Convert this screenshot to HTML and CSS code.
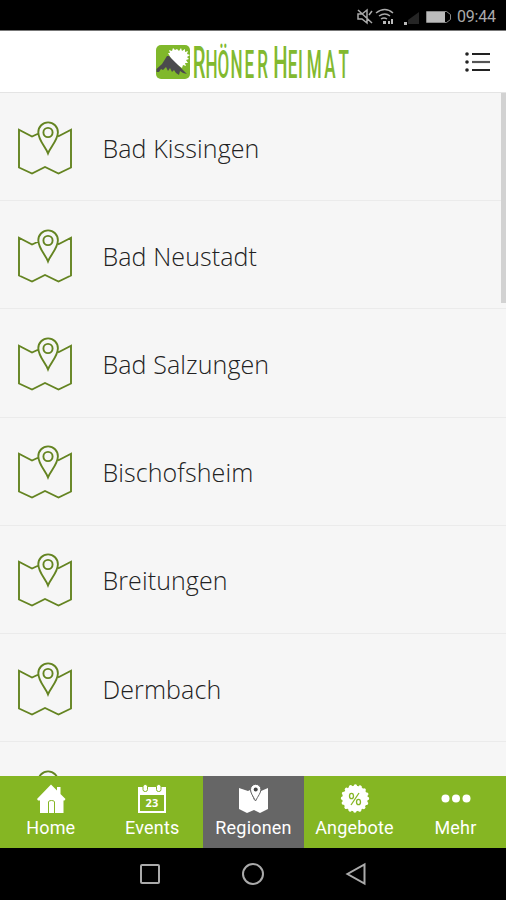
FILE: index.html
```html
<!DOCTYPE html>
<html lang="de">
<head>
<meta charset="utf-8">
<title>Rhöner Heimat</title>
<link rel="stylesheet" href="styles.css">
</head>
<body>
<svg class="defs" aria-hidden="true">
  <symbol id="map" viewBox="0 0 56 56">
    <path d="M21.5 13.500 15 16.500 2 9.700V47.500L15 53.500 28 47 41.500 53.500 54 47.500V9.700L41 16.500M31 33.300C28.500 27 21.300 20 21.300 12.200a9.800 9.800 0 0 1 19.600 0C40.900 20 33.500 27 31 33.300Z"/>
    <circle cx="31" cy="12.500" r="4.600"/>
  </symbol>
</svg>
<div class="screen">
  <div class="status">
    <svg class="status-icons" width="98" height="18" viewBox="0 0 98 18">
      <g fill="none" stroke="#aaa" stroke-width="1.500">
        <path d="M1 6h4l5-4v13l-5-4H1zM1 2l14 13M12 7l3-4"/>
        <path d="M19 5q9-7 17 0M22 8q6-4 11 0M24 11q3-2 6 0"/>
      </g>
      <path d="M26 13h3v3h-3zM31 13h2v3h-2zM34 11h2v5h-2zM47 14h3v3h-3z" fill="#bbb"/>
      <path d="M51 16V12l11-8v12z" fill="#252525"/>
      <path d="M69.500 3.500h20l4 3v5l-4 3h-20z" fill="none" stroke="#888"/>
      <path d="M70 4h18v10H70z" fill="#bbb"/>
    </svg>
    <span class="clock">09:44</span>
  </div>
  <header class="header">
    <svg class="logo" width="200" height="42" viewBox="0 0 200 42" role="img" aria-label="Rhöner Heimat">
      <rect x="1" y="4" width="34" height="34" rx="5" fill="#80b82b"/>
      <path d="M22 8l2 2 2-3 1 3 3-2v3l3-1-1 3 3 1-3 2 2 2-3 1 2 3-3 0 1 3-3-1-1 3-9-6-5-9 2 0-1-3 3 1 1-3 2 2z" fill="#fff"/>
      <path d="M1.500 31v-3L7 23l5-8 2-0 7 7 4 4 7 7-4-1-3-2-1 4-3-2-2-3-2 2-2-4-2 3-2-4-3 3-2-1-2 3z" fill="#4b4b4d"/>
      <text class="wordmark" transform="scale(.45 1)" y="37" x="84 112 139 168 199 227 245 263 295 318 337 376 408"><tspan class="cap">R</tspan>HÖNER <tspan class="cap">H</tspan>EIMAT</text>
    </svg>
    <svg class="menu" width="28" height="22" viewBox="0 0 28 22">
      <path d="M8 3h18M8 19h18" stroke="#222" stroke-width="2.200"/>
      <path d="M8 11h18" stroke="#555" stroke-width="2.200"/>
      <g fill="#222"><circle cx="3" cy="3" r="1.800"/><circle cx="3" cy="11" r="1.800"/><circle cx="3" cy="19" r="1.800"/></g>
    </svg>
  </header>
  <main class="list">
    <div class="row"><svg class="map"><use href="#map"/></svg><span>Bad Kissingen</span></div>
    <div class="row"><svg class="map"><use href="#map"/></svg><span>Bad Neustadt</span></div>
    <div class="row"><svg class="map"><use href="#map"/></svg><span>Bad Salzungen</span></div>
    <div class="row"><svg class="map"><use href="#map"/></svg><span>Bischofsheim</span></div>
    <div class="row"><svg class="map"><use href="#map"/></svg><span>Breitungen</span></div>
    <div class="row"><svg class="map"><use href="#map"/></svg><span>Dermbach</span></div>
    <div class="row"><svg class="map"><use href="#map"/></svg></div>
    <div class="scrollbar"></div>
  </main>
  <nav class="tabs">
    <div class="tab">
      <svg width="32" height="32" viewBox="0 0 32 32"><path d="M16 1.500 22 7.500V4H25.500v7l5 5-1 1.500h-1V30H5V17.500H3L2 16z" fill="#fff"/><path d="M13.500 30V19q0-1.500 3-1.500t3 1.500v11" fill="none" stroke="#85b623"/></svg>
      <span>Home</span>
    </div>
    <div class="tab">
      <svg width="32" height="32" viewBox="0 0 32 32"><path d="M2 4h28v26H2z" fill="#fff"/><path d="M4 12h24V28H4z" fill="#85b623"/><g fill="#fff" stroke="#85b623"><rect x="7" y="1.500" width="4.500" height="7" rx="2"/><rect x="20.500" y="1.500" width="4.500" height="7" rx="2"/></g><text x="16" y="24" class="day">23</text></svg>
      <span>Events</span>
    </div>
    <div class="tab active">
      <svg width="32" height="32" viewBox="0 0 32 32"><path d="M1 5l9 3 2-1 4 10 5-10 2 1 7-3v21l-8 4-6-3-7 3-8-4z" fill="#fff"/><path d="M17.500 18C15 13 12.500 10 12.500 6.500a5.200 5.200 0 0 1 10.400 0C22.900 10 20 13 17.500 18z" fill="#fff" stroke="#666"/><circle cx="17.700" cy="6.500" r="2" fill="#444"/></svg>
      <span>Regionen</span>
    </div>
    <div class="tab">
      <svg width="32" height="32" viewBox="0 0 32 32"><circle cx="16" cy="15.500" r="12.700" fill="#fff"/><circle cx="16" cy="15.500" r="12.500" fill="none" stroke="#fff" stroke-width="3.400" stroke-linecap="round" stroke-dasharray="0.010 4.899"/><g fill="none" stroke="#85b623" stroke-width="1.300"><path d="M20 10l-8 12"/><ellipse cx="12.500" cy="13" rx="2" ry="2.700"/><ellipse cx="19.500" cy="19" rx="2" ry="2.700"/></g></svg>
      <span>Angebote</span>
    </div>
    <div class="tab">
      <svg width="32" height="32" viewBox="0 0 32 32"><g fill="#fff"><circle cx="5.500" cy="15.500" r="4"/><circle cx="16" cy="15.500" r="4"/><circle cx="26.500" cy="15.500" r="4"/></g></svg>
      <span>Mehr</span>
    </div>
  </nav>
  <footer class="system">
    <svg width="24" height="24" viewBox="0 0 24 24"><rect x="3" y="3" width="18" height="18" rx="1"/></svg>
    <svg width="24" height="24" viewBox="0 0 24 24"><circle cx="12" cy="12" r="10"/></svg>
    <svg width="24" height="24" viewBox="0 0 24 24"><path d="M20.500 2.500v19L3.500 12z"/></svg>
  </footer>
</div>
</body>
</html>
```
FILE: styles.css
```css
body { margin: 0; }
.defs { display: none; }
.screen {
  width: 506px;
  height: 900px;
  display: flex;
  flex-direction: column;
  overflow: hidden;
  background: #000;
}
.status {
  height: 31px;
  flex: none;
  box-sizing: border-box;
  border-bottom: 1px solid #777;
  display: flex;
  align-items: center;
  justify-content: flex-end;
  padding: 3px 10px 0 0;
  color: #aaa;
  font: 16px/20px Roboto, sans-serif;
}
.status-icons { margin-right: 2px; }
.clock { width: 39px; white-space: nowrap; letter-spacing: -0.2px; }
.header {
  height: 62px;
  flex: none;
  box-sizing: border-box;
  background: #fff;
  border-bottom: 1px solid #e4e4e4;
  display: flex;
  align-items: center;
  padding: 0 14px 0 155px;
}
.logo { overflow: visible; }
.menu { margin-left: auto; }
.wordmark {
  fill: #82b92f;
  font: 500 38px Roboto, sans-serif;
}
.cap { font-size: 45px; }
.list {
  position: relative;
  flex: 1;
  min-height: 0;
  overflow: hidden;
  background: #f6f6f6;
}
.row {
  height: 108.2px;
  box-sizing: border-box;
  border-bottom: 1px solid #ebebeb;
  display: flex;
  align-items: center;
  padding: 2px 0 0 17px;
  gap: 29.5px;
  color: #222;
  font: 300 25px/34px "Open Sans", sans-serif;
  letter-spacing: 0.1px;
}
.map {
  width: 56px;
  height: 56px;
  flex: none;
  fill: none;
  stroke: #648421;
  stroke-width: 1.9;
}
.scrollbar {
  position: absolute;
  top: 0;
  right: 0;
  width: 5px;
  height: 210px;
  background: #d2d2d2;
}
.tabs {
  height: 72px;
  flex: none;
  display: grid;
  grid-template-columns: 101.5px 101.5px 101px 101px 101px;
  background: #85b623;
}
.tab {
  display: flex;
  flex-direction: column;
  align-items: center;
  padding-top: 7px;
  color: #fff;
  font: 18px/26px Roboto, sans-serif;
  letter-spacing: 0.2px;
}
.active { background: #666; }
.day {
  fill: #fff;
  font: bold 11px "Open Sans", sans-serif;
  text-anchor: middle;
}
.system {
  height: 52px;
  flex: none;
  display: flex;
  justify-content: center;
  align-items: center;
  gap: 79px;
  fill: none;
  stroke: #aaa;
  stroke-width: 2;
}
```
